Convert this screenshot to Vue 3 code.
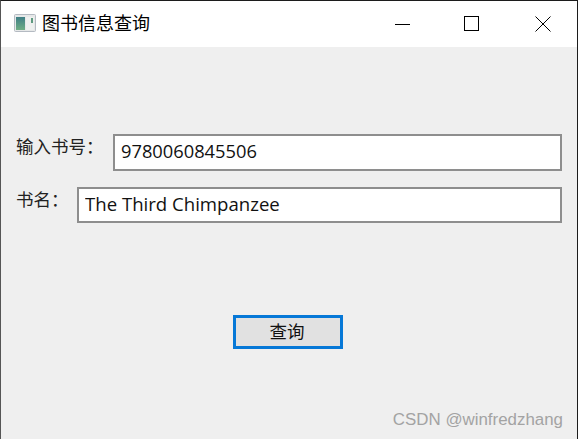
<script setup>
import {ref} from 'vue';

const isbn = ref('9780060845506');
const bookName = ref('The Third Chimpanzee');
</script>

<template>
    <div class="window">
        <header class="titlebar">
            <svg class="app-icon" width="24" height="20" viewBox="0 0 24 20">
                <defs>
                    <linearGradient id="pic" x1="0" y1="0" x2="0" y2="1">
                        <stop offset="0" stop-color="#3f7f86"/>
                        <stop offset="1" stop-color="#6fae84"/>
                    </linearGradient>
                </defs>
                <rect x="1.5" y="1.5" width="21" height="17" rx="1" fill="#e6e8e8" stroke="#b4bac2"/>
                <rect x="3" y="4" width="9" height="13" fill="url(#pic)"/>
                <rect x="13" y="4" width="8" height="13" fill="#eef0ef"/>
                <rect x="18" y="5" width="2" height="5" fill="#5f9a80"/>
            </svg>
            <span class="title">图书信息查询</span>
            <div class="controls">
                <svg width="16" height="16" viewBox="0 0 16 16"><path d="M0 8.5H15" stroke="#000" fill="none"/></svg>
                <svg width="16" height="16" viewBox="0 0 16 16"><rect x="0.5" y="0.5" width="14" height="14" stroke="#000" fill="none"/></svg>
                <svg class="close" width="16" height="16" viewBox="0 0 16 16"><path d="M0.5 0.5L15.5 15.5M15.5 0.5L0.5 15.5" stroke="#000" fill="none"/></svg>
            </div>
        </header>
        <main class="content">
            <div class="row first">
                <label class="label">输入书号：</label>
                <input class="field isbn" v-model="isbn" />
            </div>
            <div class="row second">
                <label class="label">书名：</label>
                <input class="field" v-model="bookName" />
            </div>
            <button class="query">查询</button>
        </main>
        <span class="watermark">CSDN @winfredzhang</span>
    </div>
</template>

<style scoped>
.window {
    position: relative;
    box-sizing: border-box;
    width: 578px;
    height: 439px;
    display: flex;
    flex-direction: column;
    background: #efefef;
    border-top: 1px solid #1c1c1c;
    border-right: 1px solid #1c1c1c;
    border-left: 1px solid #555;
    font-family: "Open Sans", "Noto Sans CJK SC", sans-serif;
    color: #111;
    overflow: hidden;
}
.titlebar {
    box-sizing: border-box;
    height: 46px;
    flex: none;
    display: flex;
    align-items: center;
    background: #fff;
    padding: 0 0 2px 12px;
}
.app-icon {
    margin-right: 5px;
}
.title {
    font-family: "Noto Sans CJK SC", sans-serif;
    font-size: 18px;
    color: #000;
    margin-bottom: 2px;
}
.controls {
    margin-left: auto;
    display: flex;
    gap: 53px;
    padding-right: 26px;
    padding-top: 2px;
}
.close {
    margin-left: 2px;
}
.content {
    flex: 1;
    padding: 87px 15px 0 15px;
    display: flex;
    flex-direction: column;
}
.row {
    display: flex;
    align-items: flex-start;
}
.second {
    margin-top: 16px;
}
.label {
    font-family: "Noto Sans CJK SC", sans-serif;
    font-size: 17.5px;
    line-height: 24px;
    color: #222;
    flex: none;
}
.first .label {
    width: 97px;
}
.second .label {
    width: 61px;
}
.field {
    flex: 1;
    min-width: 0;
    box-sizing: border-box;
    height: 37px;
    border: 2px solid #8e8e8e;
    background: #fff;
    outline: none;
    padding: 0 6px 3px;
    font-family: "Open Sans", sans-serif;
    font-size: 18.6px;
    color: #111;
}
.isbn {
    font-size: 18.3px;
    padding-bottom: 5px;
}
.second .field {
    height: 36px;
}
.query {
    box-sizing: border-box;
    align-self: flex-start;
    margin: 92px 0 0 217px;
    width: 110px;
    height: 34px;
    border: 3px solid #0678d7;
    background: #e1e1e1;
    padding: 0 2px 3px 0;
    font-family: "Noto Sans CJK SC", sans-serif;
    font-size: 17.5px;
    color: #111;
}
.watermark {
    position: absolute;
    right: 14px;
    bottom: 9px;
    font-family: "Liberation Sans", sans-serif;
    font-size: 16.9px;
    color: #a3a3a3;
}
</style>
